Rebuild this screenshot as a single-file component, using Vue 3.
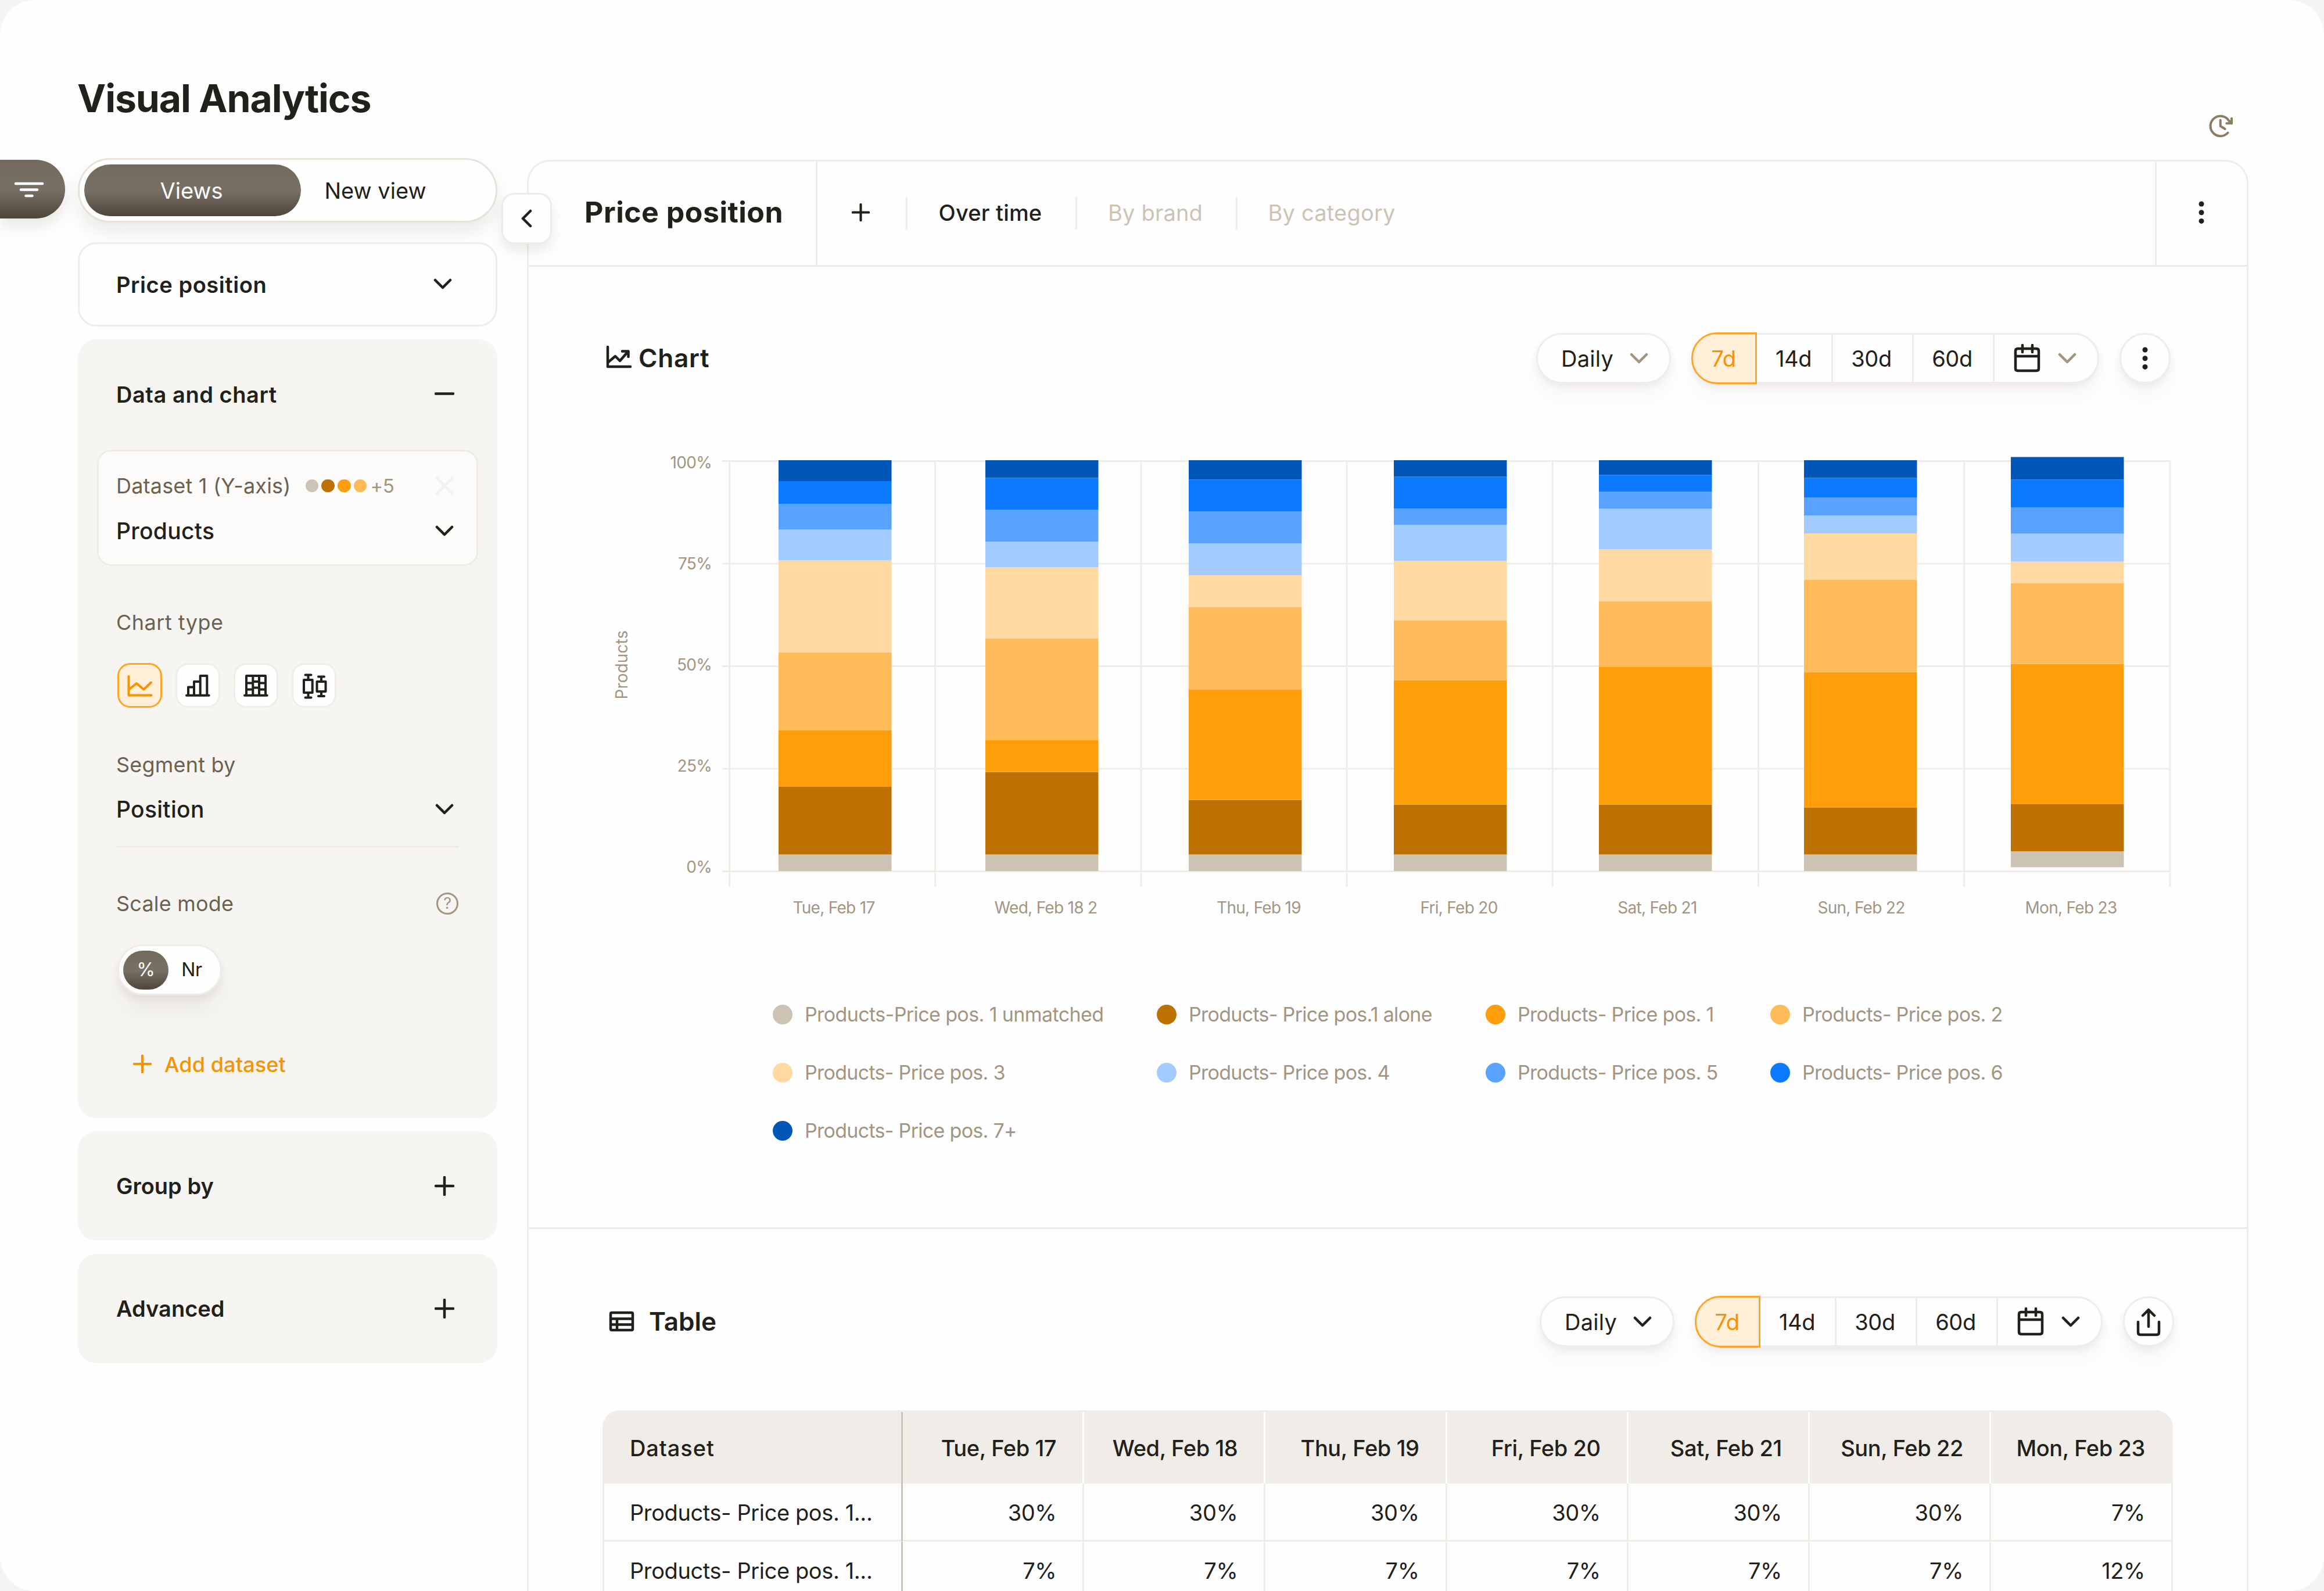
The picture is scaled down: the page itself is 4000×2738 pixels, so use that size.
<template>
  <div class="page">
    <header class="page-header">
      <h1 class="page-title">Visual Analytics</h1>
      <svg class="history-icon" viewBox="0 0 48 48">
        <path d="M35.500 36.500A17.200 17.200 0 1 1 37 15.300L42 20.300" />
        <path d="M42 11.700v8.600h-8.600" />
        <path d="M22.700 14.700v10.300l8 5" />
      </svg>
    </header>

    <div class="layout">
      <div class="rail">
        <button class="filter-btn">
          <svg viewBox="0 0 52 28">
            <path d="M3 4h46M12 14.500h28M20.500 25h11" />
          </svg>
        </button>
      </div>

      <aside class="sidebar">
        <div class="tabs">
          <button class="tab active">Views</button>
          <button class="tab">New view</button>
        </div>

        <div class="card select-card">
          <span class="card-title wide">Price position</span>
          <svg class="chevron" viewBox="0 0 34 20"><path d="M4 3l13 13L30 3" /></svg>
        </div>

        <div class="card data-card">
          <div class="card-head">
            <span class="card-title wide">Data and chart</span>
            <svg class="sign" viewBox="0 0 34 34"><path d="M2 15.500h30" /></svg>
          </div>

          <div class="dataset">
            <div class="row">
              <span class="label dataset-name">Dataset 1 (Y-axis)</span>
              <span class="dots">
                <i v-for="s in series.slice(0, 4)" :key="s.name" :style="{ background: s.color }"></i>
              </span>
              <span class="more">+5</span>
              <svg class="remove" viewBox="0 0 34 34"><path d="M4 4l26 26M30 4L4 30" /></svg>
            </div>
            <div class="row product-row">
              <span class="value">Products</span>
              <svg class="chevron" viewBox="0 0 34 20"><path d="M4 3l13 13L30 3" /></svg>
            </div>
          </div>

          <div class="settings">
            <div class="row type-row"><span class="label">Chart type</span></div>
            <div class="chart-types">
              <button class="type-btn active">
                <svg viewBox="0 0 48 48"><path d="M5.500 8v32.500h39M5.500 31L19 20l12.300 10.500L44 18.500" /></svg>
              </button>
              <button class="type-btn">
                <svg viewBox="0 0 48 48">
                  <path d="M5 40.800h38.700M8 40.800V26.500h10M18 40.800V17h10.700M28.700 40.800V7h11.600v33.800" />
                </svg>
              </button>
              <button class="type-btn">
                <svg viewBox="0 0 48 48">
                  <path d="M5 40.800h38.700M8 40.800V7h33v33.800M19.300 7v33.800M30 7v33.800M8 19.500h11.300M8 30.500h11.300M19.300 17H30M19.300 27.500H30M30 19.500h11M30 30.500h11" />
                </svg>
              </button>
              <button class="type-btn">
                <svg viewBox="0 0 48 48">
                  <path d="M9.500 5.500h10M14.500 5.500V14M14.500 36v8.500M9.500 44.500h10M7 14h14.700v22H7zM32 8.500h10M37 8.500v8M37 34v8M32 42h10M29.500 17h15v17h-15z" />
                </svg>
              </button>
            </div>

            <div class="row segment-row"><span class="label">Segment by</span></div>
            <div class="row position-row">
              <span class="value">Position</span>
              <svg class="chevron" viewBox="0 0 34 20"><path d="M4 3l13 13L30 3" /></svg>
            </div>
            <div class="divider"></div>

            <div class="row scale-row">
              <span class="label">Scale mode</span>
              <span class="help">?</span>
            </div>
            <div class="scale-toggle">
              <span class="scale-opt active">%</span>
              <span class="scale-opt">Nr</span>
            </div>

            <div class="row add-row">
              <svg viewBox="0 0 34 34"><path d="M2 17h30M17 2v30" /></svg>
              <span>Add dataset</span>
            </div>
          </div>
        </div>

        <div v-for="name in ['Group by', 'Advanced']" :key="name" class="card closed-card">
          <span class="card-title">{{ name }}</span>
          <svg class="sign" viewBox="0 0 34 34"><path d="M2 17h30M17 2v30" /></svg>
        </div>
      </aside>

      <main class="panel">
        <button class="collapse-btn">
          <svg viewBox="0 0 20 34"><path d="M17 4L4 17l13 13" /></svg>
        </button>

        <div class="panel-head">
          <h2 class="panel-title">Price position</h2>
          <div class="add-view">
            <svg viewBox="0 0 34 34"><path d="M2 17h30M17 2v30" /></svg>
          </div>
          <span class="sep"></span>
          <div class="view-tab over">Over time</div>
          <span class="sep"></span>
          <div class="view-tab brand muted">By brand</div>
          <span class="sep"></span>
          <div class="view-tab category muted">By category</div>
          <div class="panel-menu">
            <svg class="kebab" viewBox="0 0 12 42">
              <circle v-for="cy in [6, 20.700, 35.400]" :key="cy" cx="6" :cy="cy" r="4.500" />
            </svg>
          </div>
        </div>

        <section v-for="sec in sections" :key="sec.id" :class="['section', sec.id]">
          <div class="section-head">
            <svg v-if="sec.id === 'chart'" class="section-icon" viewBox="0 0 48 44">
              <path d="M5 3v34h39M5 30l13-11 8 8 13-15M30 10.500h10.500V20" />
            </svg>
            <svg v-else class="section-icon" viewBox="0 0 48 44">
              <path d="M7 7h34q2 0 2 2v26q0 2-2 2H7q-2 0-2-2V9q0-2 2-2zM5 17.500h38M5 27.500h38M16 17.500V37" />
            </svg>
            <h3>{{ sec.title }}</h3>

            <div class="controls">
              <div class="pill daily">
                <span>Daily</span>
                <svg class="chevron" viewBox="0 0 34 20"><path d="M4 3l13 13L30 3" /></svg>
              </div>
              <div class="pill ranges">
                <span
                  v-for="range in ranges"
                  :key="range"
                  :class="['range', { active: range === activeRange }]"
                  @click="activeRange = range"
                >{{ range }}</span>
                <span class="range calendar">
                  <svg class="calendar-icon" viewBox="0 0 48 52">
                    <path d="M8 9h32q4 0 4 4v30q0 4-4 4H8q-4 0-4-4V13q0-4 4-4zM4 22h40M16 3v12M33 3v12" />
                  </svg>
                  <svg class="chevron" viewBox="0 0 34 20"><path d="M4 3l13 13L30 3" /></svg>
                </span>
              </div>
              <div class="pill round">
                <svg v-if="sec.id === 'chart'" class="kebab" viewBox="0 0 12 42">
                  <circle v-for="cy in [6, 20.700, 35.400]" :key="cy" cx="6" :cy="cy" r="4.500" />
                </svg>
                <svg v-else class="share" viewBox="0 0 44 50">
                  <path d="M4 25v18q0 4 4 4h28q4 0 4-4V25M22 33V4M12 14L22 4l10 10" />
                </svg>
              </div>
            </div>
          </div>

          <template v-if="sec.id === 'chart'">
            <svg class="plot" viewBox="0 0 2710 860">
              <g class="grid">
                <line v-for="i in 5" :key="`h${i}`" x1="203" x2="2696" :y1="gridY(i - 1)" :y2="gridY(i - 1)" />
                <line v-for="i in 8" :key="`v${i}`" :x1="gridX(i - 1)" :x2="gridX(i - 1)" y1="53" y2="786" />
              </g>
              <g class="axis">
                <text v-for="(tick, i) in ticks" :key="tick" x="185" :y="66 + i * 174" text-anchor="end">{{ tick }}</text>
                <text v-for="bar in bars" :key="bar.label" :x="bar.labelX" y="832" text-anchor="middle">{{ bar.label }}</text>
                <text class="axis-title" transform="translate(40 404) rotate(-90)" text-anchor="middle">Products</text>
              </g>
              <g v-for="bar in bars" :key="bar.x">
                <rect
                  v-for="part in stack(bar)"
                  :key="part.color"
                  :x="bar.x"
                  :y="part.y"
                  width="194.500"
                  :height="part.height"
                  :fill="part.color"
                />
              </g>
            </svg>

            <div class="legend">
              <div v-for="s in series" :key="s.name" class="legend-item">
                <i :style="{ background: s.color }"></i>
                <span>{{ s.name }}</span>
              </div>
            </div>
          </template>

          <div v-else class="data-table">
            <div class="tr th">
              <span>Dataset</span>
              <span v-for="day in days" :key="day">{{ day }}</span>
            </div>
            <div v-for="(row, r) in rows" :key="r" class="tr">
              <span>Products- Price pos. 1...</span>
              <span v-for="(cell, c) in row" :key="c">{{ cell }}</span>
            </div>
          </div>
        </section>
      </main>
    </div>
  </div>
</template>

<script setup>
import { ref } from 'vue';

const series = [
  { name: 'Products-Price pos. 1 unmatched', color: '#cdc3b5' },
  { name: 'Products- Price pos.1 alone', color: '#bd7100' },
  { name: 'Products- Price pos. 1', color: '#ff9d0b' },
  { name: 'Products- Price pos. 2', color: '#ffbb57' },
  { name: 'Products- Price pos. 3', color: '#ffd9a1' },
  { name: 'Products- Price pos. 4', color: '#a3cbff' },
  { name: 'Products- Price pos. 5', color: '#5aa2ff' },
  { name: 'Products- Price pos. 6', color: '#0b7aff' },
  { name: 'Products- Price pos. 7+', color: '#0057b8' },
];

const sections = [
  { id: 'chart', title: 'Chart' },
  { id: 'table', title: 'Table' },
];

const ranges = ['7d', '14d', '30d', '60d'];
const activeRange = ref('7d');

const ticks = ['100%', '75%', '50%', '25%', '0%'];

// heights go from the bottom of the bar to the top, same order as series
const bars = [
  { label: 'Tue, Feb 17', labelX: 395, x: 300, base: 759, heights: [28.5, 116.5, 97, 134, 158.5, 53, 44.5, 39, 36] },
  { label: 'Wed, Feb 18 2', labelX: 760, x: 656, base: 759, heights: [28.5, 142, 54.5, 175, 122.5, 44.5, 55, 54.5, 30.5] },
  { label: 'Thu, Feb 19', labelX: 1126.5, x: 1006, base: 759, heights: [28.5, 94, 189.5, 142, 55, 55, 54.5, 55, 33.5] },
  { label: 'Fri, Feb 20', labelX: 1471, x: 1359, base: 759, heights: [28.5, 86, 214, 103, 102.5, 61.5, 28, 55, 28.5] },
  { label: 'Sat, Feb 21', labelX: 1812.5, x: 1712, base: 759, heights: [28.5, 86, 236.5, 113.5, 89, 70, 29, 29, 25.5] },
  { label: 'Sun, Feb 22', labelX: 2163.5, x: 2065, base: 759, heights: [28.5, 81, 233, 158.5, 80, 31, 30.5, 34, 30.5] },
  { label: 'Mon, Feb 23', labelX: 2524.5, x: 2421, base: 752.5, heights: [27.5, 81, 241.5, 139, 37, 48, 45, 48, 39] },
];

const days = ['Tue, Feb 17', 'Wed, Feb 18', 'Thu, Feb 19', 'Fri, Feb 20', 'Sat, Feb 21', 'Sun, Feb 22', 'Mon, Feb 23'];
const rows = [
  ['30%', '30%', '30%', '30%', '30%', '30%', '7%'],
  ['7%', '7%', '7%', '7%', '7%', '7%', '12%'],
];

const gridX = (i) => 215.5 + i * 354.2;
const gridY = (i) => 53.5 + i * 176.5;

const stack = (bar) => {
  let y = bar.base;
  return bar.heights.map((height, i) => {
    y -= height;
    return { y, height, color: series[i].color };
  });
};
</script>

<style>
body {
  background: #f5f4f2;
}
</style>

<style scoped>
* {
  box-sizing: border-box;
}

.page {
  width: 4000px;
  height: 2738px;
  overflow: hidden;
  border-radius: 60px;
  background: #fefefe;
  color: #22201a;
  font-family: Inter, "Liberation Sans", sans-serif;
  font-size: 38px;
  line-height: 48px;
  font-weight: 500;
  letter-spacing: -0.4px;
}

button {
  display: flex;
  align-items: center;
  justify-content: center;
  padding: 0;
  border: none;
  font: inherit;
  letter-spacing: inherit;
  color: inherit;
  background: #fefefe;
  cursor: pointer;
}

h1,
h2,
h3 {
  margin: 0;
}

svg {
  display: block;
  flex: none;
  fill: none;
  stroke: currentColor;
  stroke-width: 4.5;
  stroke-linecap: round;
  stroke-linejoin: round;
}

.page-header {
  display: flex;
  justify-content: space-between;
  height: 272px;
  padding: 129px 153px 0 133px;
}

.page-title {
  font-size: 66px;
  line-height: 80px;
  font-weight: 700;
  letter-spacing: -1.1px;
}

.history-icon {
  width: 48px;
  height: 48px;
  margin-top: 63px;
  stroke-width: 4;
  color: #8c7d65;
}

.layout {
  display: grid;
  grid-template-columns: 134px 722px 3014px;
  height: 2466px;
}

.rail {
  padding-top: 3px;
}

.filter-btn {
  width: 112px;
  height: 101px;
  padding-right: 12px;
  border-radius: 0 50px 50px 0;
  color: #fff;
  background: linear-gradient(#716a5d, #787064 50%, #4e463b);
  box-shadow: 0 14px 24px rgba(80, 70, 50, 0.12);
}

.filter-btn svg {
  width: 52px;
  height: 28px;
}

.tabs {
  display: flex;
  height: 111px;
  padding: 8px;
  border: 3px solid #e8e3da;
  border-radius: 56px;
  background: #fefefe;
  box-shadow: 0 18px 30px rgba(80, 70, 50, 0.1);
}

.tab {
  width: 256px;
  border-radius: 45px;
  font-weight: 400;
  letter-spacing: 0;
}

.tab.active {
  width: 373px;
  padding-right: 4px;
  color: #fff;
  background: linear-gradient(#716a5d, #787064 50%, #4e463b);
}

.card {
  border-radius: 32px;
  background: #f6f5f1;
}

.select-card,
.closed-card,
.card-head {
  display: flex;
  align-items: center;
  justify-content: space-between;
  padding: 0 74px 0 66px;
}

.select-card {
  height: 145px;
  margin: 34px 0 22px;
  padding: 0 74px 0 63px;
  border: 3px solid #f0ece8;
  background: #fefefe;
}

.card-title {
  font-weight: 600;
  letter-spacing: 0;
}

.card-title.wide {
  letter-spacing: 0.55px;
}

.chevron {
  width: 34px;
  height: 20px;
}

.select-card .chevron {
  margin-bottom: 2px;
}

.sign {
  width: 34px;
  height: 34px;
}

.data-card {
  height: 1340px;
}

.card-head {
  height: 190px;
}

.dataset {
  height: 200px;
  margin: 0 33px;
  padding: 35px 38px 0 30px;
  border: 3px solid #efece7;
  border-radius: 24px;
  background: #fcfbfa;
}

.row {
  display: flex;
  align-items: center;
  height: 48px;
}

.row .chevron,
.row .remove {
  margin-left: auto;
}

.label {
  font-size: 36px;
  font-weight: 400;
  letter-spacing: 0.2px;
  color: #6c6150;
}

.value {
  font-size: 39px;
  letter-spacing: 0.3px;
}

.dots {
  display: flex;
  gap: 5px;
  margin-left: 25px;
}

.dots i {
  width: 22.700px;
  height: 22.700px;
  border-radius: 50%;
}

.more {
  margin-left: 6px;
  font-size: 33px;
  font-weight: 400;
  color: #a39581;
}

.remove {
  width: 34px;
  height: 34px;
  color: #f3f2f0;
}

.product-row {
  margin-top: 30px;
}

.settings {
  padding: 0 66px;
}

.type-row {
  margin-top: 73px;
}

.type-row .label {
  letter-spacing: 0.5px;
}

.chart-types {
  display: flex;
  gap: 23.500px;
  margin: 46px 0 0 2px;
}

.type-btn {
  width: 76.500px;
  height: 77px;
  border: 3px solid #f0ede7;
  border-radius: 22px;
}

.type-btn.active {
  border-color: #ffa423;
  color: #f59300;
  background: #ffefd9;
}

.type-btn svg {
  width: 48px;
  height: 48px;
  stroke-width: 4;
}

.segment-row {
  margin-top: 74px;
}

.position-row {
  margin-top: 29px;
  padding-right: 8px;
}

.divider {
  height: 3px;
  margin: 39px 0 0 1px;
  background: #eeebe6;
}

.scale-row {
  margin-top: 72px;
}

.help {
  display: flex;
  align-items: center;
  justify-content: center;
  width: 38px;
  height: 38px;
  margin: 0 1px 0 auto;
  border: 3px solid #a39581;
  border-radius: 50%;
  font-size: 27px;
  font-weight: 400;
  color: #a39581;
}

.scale-toggle {
  display: flex;
  align-items: center;
  width: 180px;
  height: 88px;
  margin: 46px 0 0 2px;
  padding: 0 7px;
  border: 3px solid #f0ebe6;
  border-radius: 44px;
  background: #fefefe;
  font-size: 32px;
  font-weight: 400;
  box-shadow: 0 30px 30px rgba(120, 80, 60, 0.05), 0 8px 14px rgba(80, 70, 50, 0.07);
}

.scale-opt {
  width: 80px;
  text-align: center;
}

.scale-opt.active {
  width: 78px;
  height: 67px;
  border-radius: 34px;
  line-height: 66px;
  color: #fff;
  background: linear-gradient(#716a5d, #787064 50%, #4e463b);
}

.add-row {
  margin: 95px 0 0 29px;
  font-size: 36px;
  letter-spacing: 0.1px;
  color: #f59300;
}

.add-row svg {
  width: 32px;
  height: 32px;
  margin: 0 22px 3px 0;
}

.closed-card {
  height: 188px;
  margin-top: 23px;
}

.panel {
  position: relative;
  width: 2963px;
  height: 2500px;
  margin: 3px 0 0 51px;
  border: 3px solid #f0ede9;
  border-radius: 40px 40px 0 0;
}

.collapse-btn {
  position: absolute;
  left: -47px;
  top: 54px;
  width: 87px;
  height: 88px;
  padding-right: 2px;
  border: 3px solid #f0ebe6;
  border-radius: 22px;
  box-shadow: 0 12px 20px rgba(80, 70, 50, 0.1);
}

.collapse-btn svg {
  width: 20px;
  height: 34px;
}

.panel-head {
  display: flex;
  align-items: center;
  height: 181px;
  border-bottom: 3px solid #f0ede9;
}

.panel-title {
  height: 178px;
  width: 497px;
  padding: 0 0 3px 96px;
  border-right: 3px solid #f0ede9;
  font-size: 50px;
  line-height: 175px;
  font-weight: 700;
  letter-spacing: 0.5px;
  white-space: nowrap;
}

.add-view {
  width: 152px;
  padding: 0 4px 3px 0;
}

.add-view svg {
  width: 31px;
  height: 31px;
  margin: 0 auto;
}

.sep {
  width: 3px;
  height: 56px;
  background: #f0ede9;
}

.view-tab {
  padding: 0 4px 3px 0;
  letter-spacing: 0.2px;
  text-align: center;
}

.view-tab.over {
  width: 289px;
}

.view-tab.brand {
  width: 273px;
}

.view-tab.category {
  width: 328px;
}

.muted {
  color: #cdc3b5;
  font-weight: 400;
}

.panel-menu {
  display: flex;
  align-items: center;
  justify-content: center;
  width: 158px;
  height: 178px;
  margin-left: auto;
  padding: 0 2px 3px 0;
  border-left: 3px solid #f0ede9;
}

.kebab {
  width: 12px;
  height: 42px;
  fill: currentColor;
  stroke: none;
}

.section.chart {
  height: 1656px;
  padding-top: 113px;
  border-bottom: 3px solid #f0ede9;
}

.section.table {
  padding-top: 115px;
}

.section-head {
  display: flex;
  align-items: center;
  height: 89px;
  padding: 0 131px;
}

.table .section-head {
  padding: 0 125px 0 136px;
}

.section-icon {
  width: 48px;
  height: 44px;
  margin-bottom: 1px;
  stroke-width: 4.5;
}

.section-head h3 {
  margin: 0 0 2px 10px;
  font-size: 44px;
  font-weight: 600;
  letter-spacing: 0.8px;
}

.table .section-head h3 {
  margin-left: 23px;
  letter-spacing: 0;
}

.controls {
  display: flex;
  align-items: center;
  gap: 35px;
  margin-left: auto;
}

.pill {
  display: flex;
  align-items: center;
  height: 87px;
  border: 3px solid #f0ece8;
  border-radius: 44px;
  background: #fefefe;
  font-weight: 400;
  box-shadow: 0 24px 30px rgba(120, 80, 80, 0.04), 0 6px 12px rgba(80, 60, 50, 0.07);
}

.daily {
  justify-content: space-between;
  width: 232px;
  padding: 0 35px 0 40px;
  letter-spacing: 0.3px;
}

.chart .controls .chevron {
  color: #a39581;
}

.ranges {
  width: 702px;
}

.range {
  display: flex;
  align-items: center;
  justify-content: center;
  width: 139px;
  height: 81px;
  padding-right: 4px;
  border-right: 3px solid #f0ece8;
}

.range:nth-child(2) {
  width: 131px;
  padding-right: 2px;
}

.range.active {
  width: 113px;
  height: 89px;
  margin-left: -3px;
  padding-right: 2px;
  border: 3px solid #ffa423;
  border-radius: 44px 0 0 44px;
  background: #ffefd9;
  color: #f59300;
}

.range.calendar {
  justify-content: flex-start;
  width: 176px;
  padding-left: 32px;
  border: none;
}

.calendar-icon {
  width: 48px;
  height: 52px;
}

.calendar .chevron {
  margin-left: 28px;
}

.round {
  justify-content: center;
  width: 88px;
}

.share {
  width: 44px;
  height: 50px;
}

.plot {
  width: 2710px;
  height: 860px;
  margin: 79px 0 0 130px;
}

.grid {
  stroke: #f0ede8;
  stroke-width: 3;
  stroke-linecap: butt;
}

.axis text {
  fill: #a39581;
  stroke: none;
  font-size: 28px;
  font-weight: 400;
  letter-spacing: -0.7px;
}

.axis .axis-title {
  letter-spacing: 0.1px;
}

.plot rect {
  stroke: none;
}

.legend {
  display: grid;
  grid-template-columns: 661px 566px 490px 500px;
  row-gap: 50px;
  margin: 121px 0 0 420px;
}

.legend-item {
  display: flex;
  align-items: center;
  height: 50px;
  font-size: 34px;
  font-weight: 400;
  letter-spacing: -0.7px;
  color: #a39581;
  white-space: nowrap;
}

.legend-item i {
  width: 34px;
  height: 34px;
  margin-right: 21px;
  border-radius: 50%;
}

.legend-item:first-child {
  letter-spacing: -0.6px;
}

.data-table {
  width: 2703px;
  height: 500px;
  margin: 108px 0 0 127px;
  border: 3px solid #f0ece8;
  border-radius: 30px 30px 0 0;
  overflow: hidden;
}

.tr {
  display: grid;
  grid-template-columns: 514px repeat(6, 312.200px) 1fr;
  height: 100px;
  border-bottom: 3px solid #f0ece8;
  font-weight: 400;
}

.tr span {
  padding: 2px 45px 0 0;
  border-right: 3px solid #f0ece8;
  line-height: 97px;
  text-align: right;
  white-space: nowrap;
}

.tr span:first-child {
  padding: 2px 0 0 44px;
  border-color: #cdc3b5;
  text-align: left;
}

.tr span:last-child {
  border-right: none;
  padding-right: 45px;
}

.th {
  height: 123px;
  border-bottom: none;
  background: #f0ece7;
}

.th span {
  padding-top: 1px;
  border-color: #fefefe;
  line-height: 123px;
  font-weight: 500;
}

.th span:first-child {
  padding-top: 1px;
  letter-spacing: 0.9px;
}
</style>
